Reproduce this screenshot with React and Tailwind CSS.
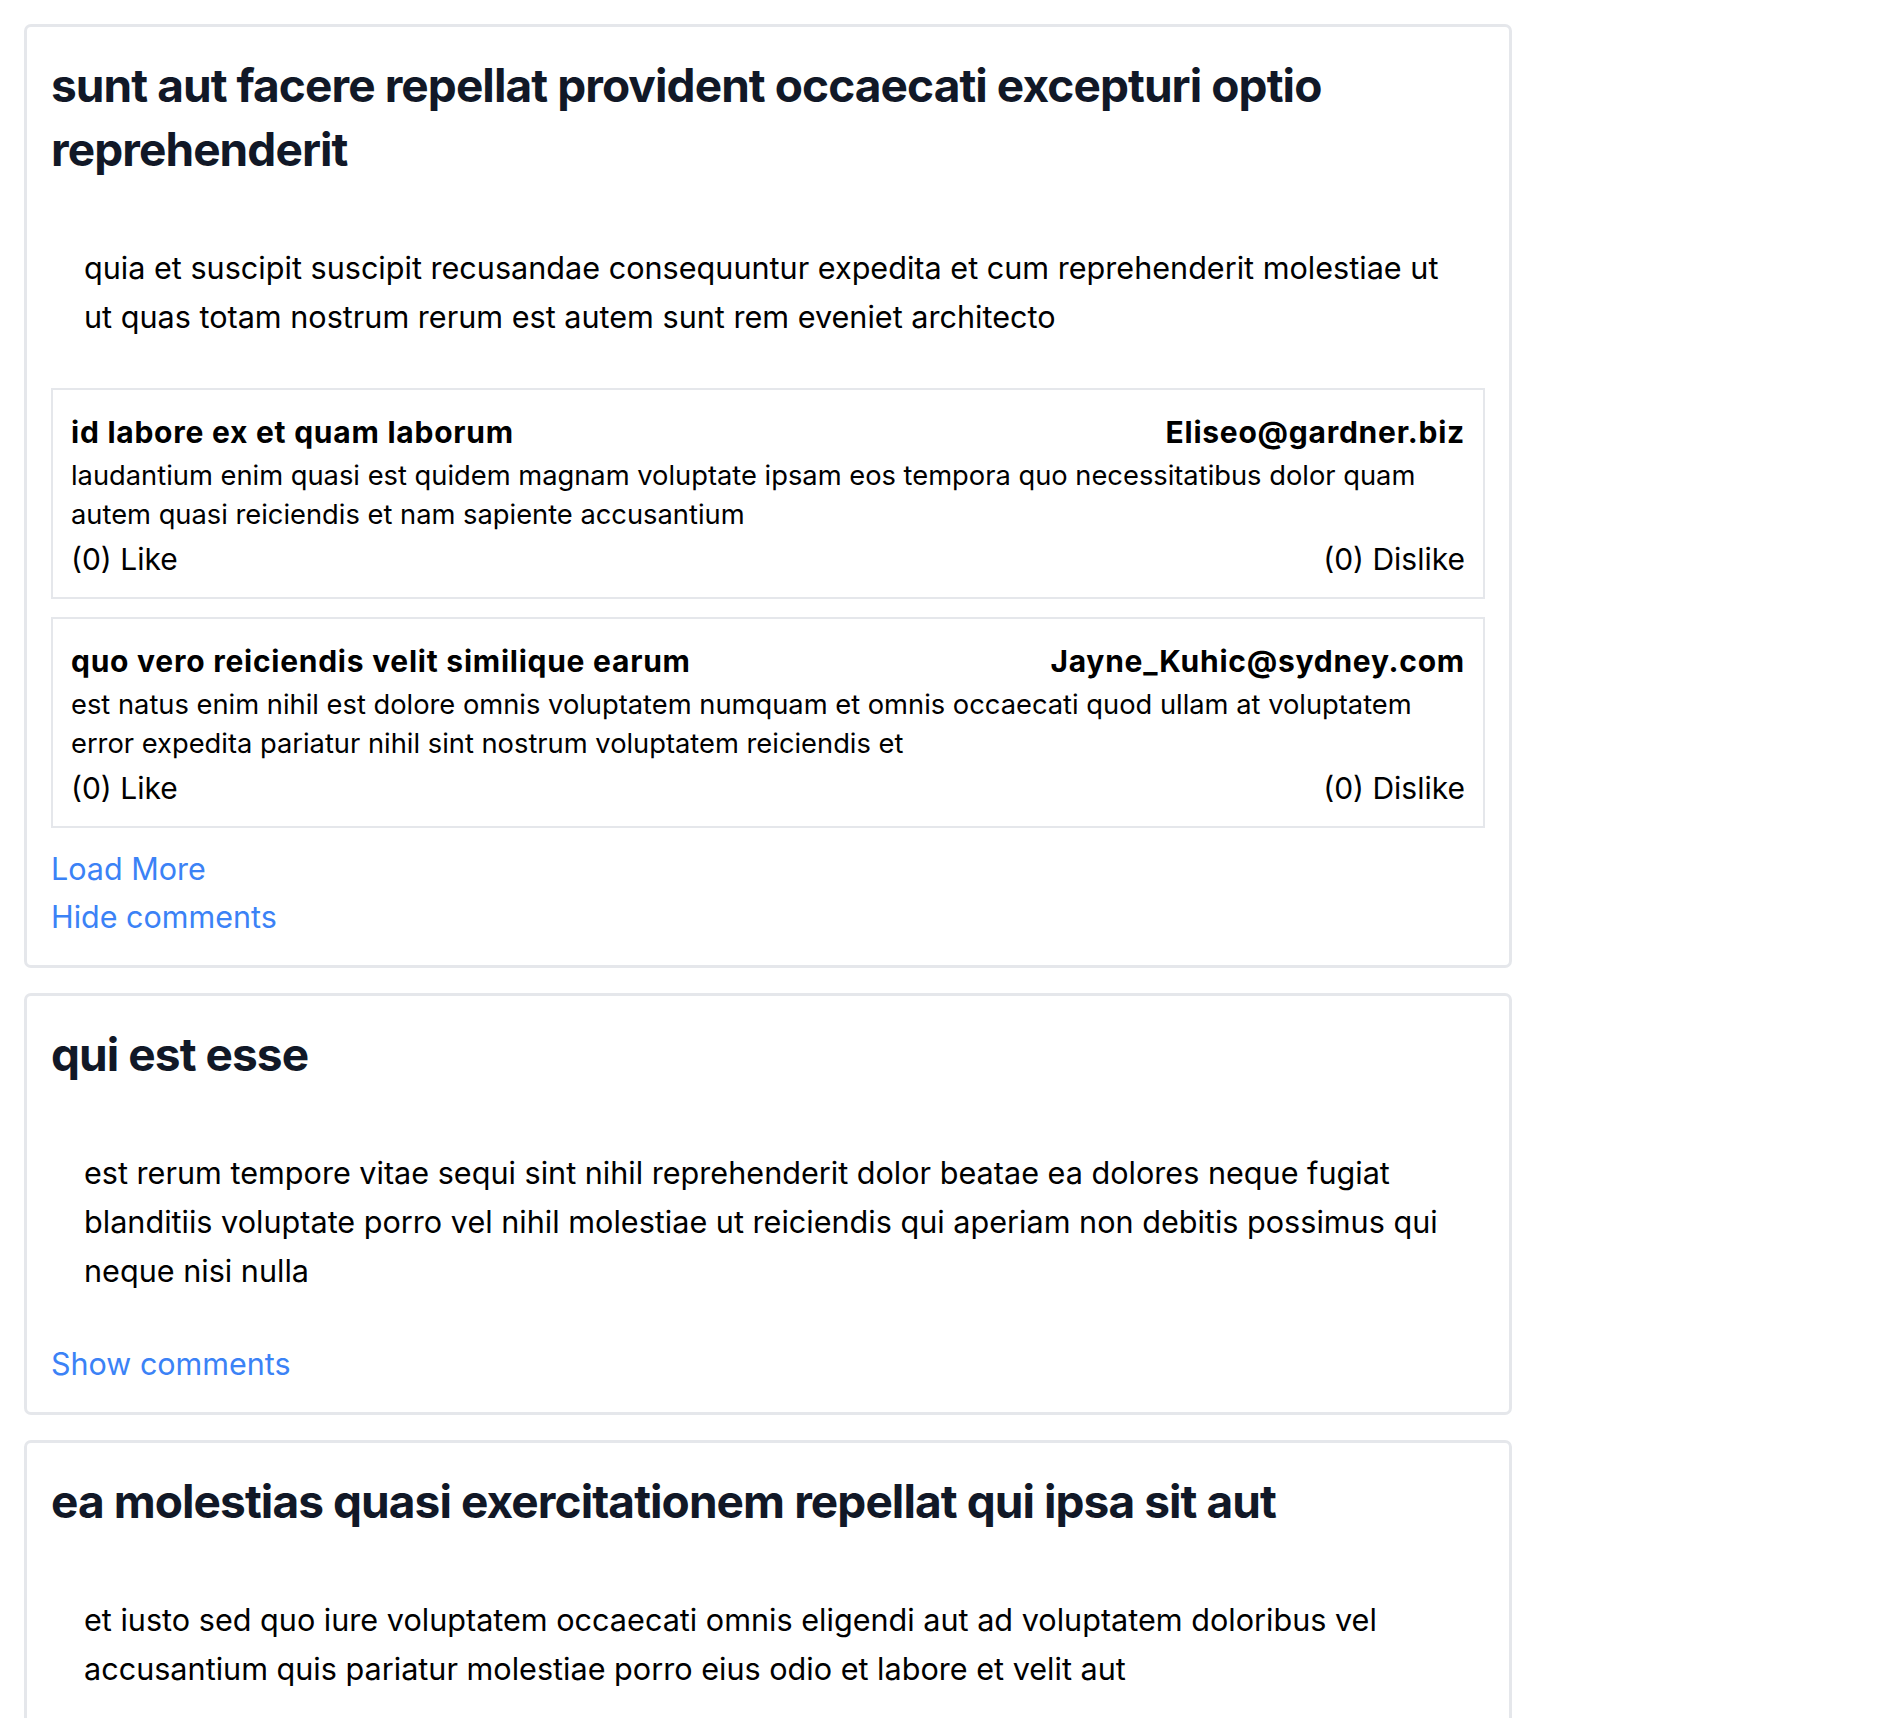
import React from "react";

const posts = [
  {
    title: "sunt aut facere repellat provident occaecati excepturi optio reprehenderit",
    body: "quia et suscipit suscipit recusandae consequuntur expedita et cum reprehenderit molestiae ut ut quas totam nostrum rerum est autem sunt rem eveniet architecto",
    comments: [
      {
        name: "id labore ex et quam laborum",
        email: "Eliseo@gardner.biz",
        body: "laudantium enim quasi est quidem magnam voluptate ipsam eos tempora quo necessitatibus dolor quam autem quasi reiciendis et nam sapiente accusantium",
      },
      {
        name: "quo vero reiciendis velit similique earum",
        email: "Jayne_Kuhic@sydney.com",
        body: "est natus enim nihil est dolore omnis voluptatem numquam et omnis occaecati quod ullam at voluptatem error expedita pariatur nihil sint nostrum voluptatem reiciendis et",
      },
    ],
  },
  {
    title: "qui est esse",
    body: "est rerum tempore vitae sequi sint nihil reprehenderit dolor beatae ea dolores neque fugiat blanditiis voluptate porro vel nihil molestiae ut reiciendis qui aperiam non debitis possimus qui neque nisi nulla",
    comments: null,
  },
  {
    title: "ea molestias quasi exercitationem repellat qui ipsa sit aut",
    body: "et iusto sed quo iure voluptatem occaecati omnis eligendi aut ad voluptatem doloribus vel accusantium quis pariatur molestiae porro eius odio et labore et velit aut",
    comments: null,
  },
];

function Comment({ c }) {
  return (
    <div className="border-2 border-[#e5e7eb] p-[18px] text-black">
      <div className="flex justify-between text-[30px] leading-[48px] font-bold tracking-[0.025em]">
        <span>{c.name}</span>
        <span>{c.email}</span>
      </div>
      <p className="text-[27.3px] leading-[39px]">{c.body}</p>
      <div className="mt-[6px] flex justify-between text-[30px] leading-[39px]">
        <button className="cursor-pointer">(0) Like</button>
        <button className="cursor-pointer">(0) Dislike</button>
      </div>
    </div>
  );
}

function Post({ p }) {
  return (
    <div className="w-[1488px] rounded-[7px] border-[3px] border-[#e5e7eb] bg-white p-[24px]">
      <h2 className="mt-[2px] text-[46px] leading-[64px] font-bold tracking-[-0.02em] text-[#111827]">
        {p.title}
      </h2>
      <p className="mt-[62px] px-[33px] text-[30.6px] leading-[49px] text-black">{p.body}</p>
      {p.comments ? (
        <>
          <div className="mt-[47px] flex flex-col gap-[18px]">
            {p.comments.map((c, i) => (
              <Comment key={i} c={c} />
            ))}
          </div>
          <div className="mt-[17px] flex flex-col items-start text-[30.5px] leading-[48px] text-[#3b82f6]">
            <button className="cursor-pointer">Load More</button>
            <button className="cursor-pointer">Hide comments</button>
          </div>
        </>
      ) : (
        <div className="mt-[45px] flex flex-col items-start text-[30.5px] leading-[48px] text-[#3b82f6]">
          <button className="cursor-pointer">Show comments</button>
        </div>
      )}
    </div>
  );
}

export default function App() {
  return (
    <div className="min-h-screen bg-white p-[24px] font-['Inter',sans-serif]">
      <div className="flex flex-col gap-[25px]">
        {posts.map((p, i) => (
          <Post key={i} p={p} />
        ))}
      </div>
    </div>
  );
}
